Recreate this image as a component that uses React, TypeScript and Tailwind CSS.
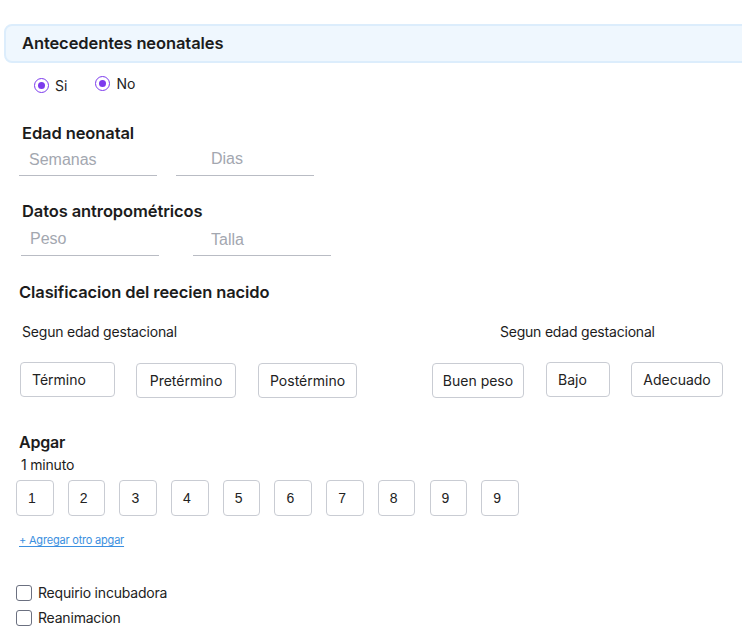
import React, { useState } from 'react';

const clsBtns = ['Término', 'Pretérmino', 'Postérmino'];
const pesoBtns = ['Buen peso', 'Bajo', 'Adecuado'];
const apgar = ['1', '2', '3', '4', '5', '6', '7', '8', '9', '9'];

const Radio = ({ label, checked, onClick, className = '' }: { label: string; checked: boolean; onClick: () => void; className?: string }) => (
  <label className={`flex items-center gap-[6px] cursor-pointer ${className}`} onClick={onClick}>
    <span className="w-[15px] h-[15px] rounded-full border-[1.5px] border-[#7c3aed] flex items-center justify-center">
      {checked && <span className="w-[7px] h-[7px] rounded-full bg-[#7c3aed]" />}
    </span>
    <span className="text-[14px] text-[#222]">{label}</span>
  </label>
);

const Underlined = ({ placeholder, className = '', padLeft = 'pl-[10px]' }: { placeholder: string; className?: string; padLeft?: string }) => (
  <input
    placeholder={placeholder}
    className={`w-[138px] border-b border-[#b9bcc4] ${padLeft} text-[16px] placeholder:text-[#a3a7b0] outline-none font-['Liberation_Sans',sans-serif] ${className}`}
  />
);

const OptionBtn = ({ label, className = '' }: { label: string; className?: string }) => (
  <button className={`h-[35px] rounded-[4px] border border-[#c9ccd3] bg-white text-[14px] text-[#222] px-[11px] whitespace-nowrap ${className}`}>
    {label}
  </button>
);

const heading = "pl-[22px] text-[16.5px] font-semibold leading-[20px] tracking-[-0.1px]";

export default function App() {
  const [sel, setSel] = useState('si');
  return (
    <div className="w-[742px] h-[630px] bg-white overflow-hidden font-['Inter',sans-serif] text-[#1c1c1c]">
      <div className="mt-[24px] ml-[4px] mr-[-12px] h-[39px] rounded-lg border-2 border-[#dcedfc] bg-[#eff7fe] flex items-center pl-[16px]">
        <span className="text-[16.5px] font-semibold tracking-[-0.1px]">Antecedentes neonatales</span>
      </div>

      <div className="flex items-center mt-[11px] pl-[34px] h-[20px]">
        <Radio label="Si" checked={sel === 'si' || true} onClick={() => setSel('si')} className="mt-[2px]" />
        <Radio label="No" checked={sel === 'no' || true} onClick={() => setSel('no')} className="ml-[28px] -mt-[2px]" />
      </div>

      <div className={`mt-[29px] ${heading}`}>Edad neonatal</div>
      <div className="flex pl-[19px]">
        <Underlined placeholder="Semanas" className="h-[33px] pt-[2px]" />
        <Underlined placeholder="Dias" className="ml-[19px] h-[33px] pt-0" padLeft="pl-[35px]" />
      </div>

      <div className={`mt-[25px] ${heading}`}>Datos antropométricos</div>
      <div className="flex items-end pl-[21px]">
        <Underlined placeholder="Peso" padLeft="pl-[9px]" className="h-[35px] pt-[1px]" />
        <Underlined placeholder="Talla" className="ml-[34px] h-[35px] pt-[4px]" padLeft="pl-[18px]" />
      </div>

      <div className={`mt-[26px] !pl-[19px] ${heading}`}>Clasificacion del reecien nacido</div>

      <div className="flex mt-[20px] text-[14px] leading-[20px] tracking-[-0.2px]">
        <span className="ml-[22px]">Segun edad gestacional</span>
        <span className="ml-[323px]">Segun edad gestacional</span>
      </div>

      <div className="flex items-start mt-[20px]">
        <OptionBtn label={clsBtns[0]} className="ml-[20px] w-[95px] h-[34px] pl-[11px] text-left" />
        <OptionBtn label={clsBtns[1]} className="ml-[21px] w-[100px] mt-[1px]" />
        <OptionBtn label={clsBtns[2]} className="ml-[22px] w-[99px] mt-[1px]" />
        <OptionBtn label={pesoBtns[0]} className="ml-[75px] w-[92px] mt-[1px] !px-[6px]" />
        <OptionBtn label={pesoBtns[1]} className="ml-[22px] w-[64px] h-[34px] text-left" />
        <OptionBtn label={pesoBtns[2]} className="ml-[21px] w-[92px] h-[34px] !px-[6px]" />
      </div>

      <div className="mt-[34px] pl-[19px] text-[16px] font-semibold leading-[20px] tracking-[-0.2px]">Apgar</div>
      <div className="mt-[4px] pl-[21px] text-[14px] leading-[18px] tracking-[-0.2px]">1 minuto</div>
      <div className="flex mt-[6px] pl-[16px] gap-[14.2px]">
        {apgar.map((n, i) => (
          <div
            key={i}
            className="w-[37.5px] h-[36px] rounded-[4px] border border-[#c9ccd3] flex items-center pl-[11px] text-[14px] font-['Liberation_Sans',sans-serif] text-[#222]"
          >
            {n}
          </div>
        ))}
      </div>

      <a className="block mt-[17px] ml-[19px] w-fit text-[11px] leading-[14px] text-[#3b8fe0] underline underline-offset-2 tracking-[-0.2px] cursor-pointer">
        + Agregar otro apgar
      </a>

      <div className="mt-[38px] pl-[16px] flex flex-col gap-[9px]">
        {['Requirio incubadora', 'Reanimacion'].map((t) => (
          <label key={t} className="flex items-center gap-[6px]">
            <span className="w-[16px] h-[16px] rounded-[3px] border-[1.5px] border-[#6b7080]" />
            <span className="text-[14px] leading-[16px] tracking-[-0.2px] text-[#222]">{t}</span>
          </label>
        ))}
      </div>
    </div>
  );
}
